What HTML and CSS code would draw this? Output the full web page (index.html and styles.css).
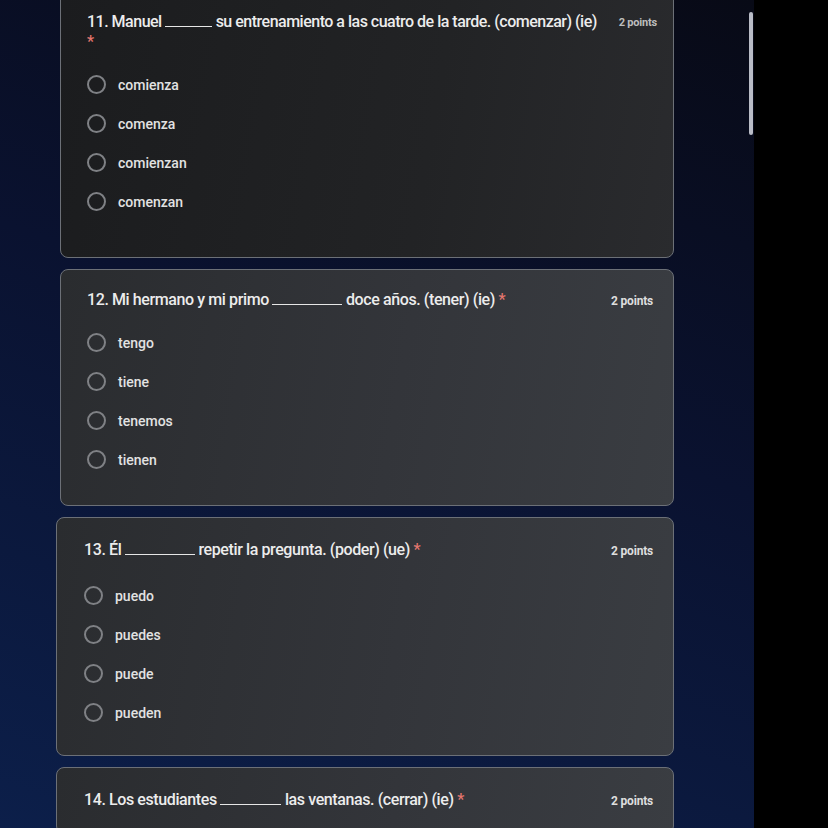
FILE: index.html
```html
<!DOCTYPE html>
<html lang="es">
<head>
    <meta charset="UTF-8">
    <title>Formulario</title>
    <link rel="stylesheet" href="styles.css">
</head>
<body>
<div class="screen">
    <div class="page">
        <div class="form">
            <div class="card card-first">
                <div class="head">
                    <div class="title">11. Manuel <span class="blank blank-s"></span> su entrenamiento a las cuatro de la tarde. (comenzar) (ie)<br><span class="req">*</span></div>
                    <div class="points points-small">2 points</div>
                </div>
                <ul class="options">
                    <li><span class="radio"></span>comienza</li>
                    <li><span class="radio"></span>comenza</li>
                    <li><span class="radio"></span>comienzan</li>
                    <li><span class="radio"></span>comenzan</li>
                </ul>
            </div>
            <div class="card">
                <div class="head">
                    <div class="title">12. Mi hermano y mi primo <span class="blank blank-m"></span> doce años. (tener) (ie) <span class="req">*</span></div>
                    <div class="points">2 points</div>
                </div>
                <ul class="options">
                    <li><span class="radio"></span>tengo</li>
                    <li><span class="radio"></span>tiene</li>
                    <li><span class="radio"></span>tenemos</li>
                    <li><span class="radio"></span>tienen</li>
                </ul>
            </div>
            <div class="card card-shift">
                <div class="head">
                    <div class="title">13. Él <span class="blank blank-m"></span> repetir la pregunta. (poder) (ue) <span class="req">*</span></div>
                    <div class="points">2 points</div>
                </div>
                <ul class="options">
                    <li><span class="radio"></span>puedo</li>
                    <li><span class="radio"></span>puedes</li>
                    <li><span class="radio"></span>puede</li>
                    <li><span class="radio"></span>pueden</li>
                </ul>
            </div>
            <div class="card card-shift">
                <div class="head">
                    <div class="title">14. Los estudiantes <span class="blank blank-n"></span> las ventanas. (cerrar) (ie) <span class="req">*</span></div>
                    <div class="points">2 points</div>
                </div>
            </div>
        </div>
        <div class="track"><div class="thumb"></div></div>
    </div>
    <div class="bezel"></div>
</div>
</body>
</html>
```

FILE: styles.css
```css
* {
    margin: 0;
    padding: 0;
    box-sizing: border-box;
}
html, body {
    height: 100%;
    overflow: hidden;
}
body {
    background: #000;
    font-family: Roboto, "Liberation Sans", sans-serif;
}
.screen {
    display: flex;
    height: 828px;
}
.page {
    flex: 0 0 754px;
    display: flex;
    background: linear-gradient(200deg, #080a16 0%, #0a1230 45%, #0c1f4a 100%);
}
.form {
    width: 614px;
    margin-left: 60px;
    margin-top: -9px;
    display: flex;
    flex-direction: column;
    gap: 11px;
}
.card {
    border: 1px solid #6c7077;
    border-radius: 8px;
    background: linear-gradient(100deg, #2a2c2f 0%, #33353a 55%, #3a3d42 100%);
    padding: 20px 20px 26px 26px;
}
.card-first {
    background: linear-gradient(100deg, #1b1c1e 0%, #222325 60%, #2a2b2e 100%);
    padding-right: 16px;
    padding-bottom: 36px;
}
.card-first .title {
    letter-spacing: -0.5px;
}
.card-shift {
    margin-left: -4px;
    padding-left: 27px;
    padding-top: 22px;
    padding-bottom: 23px;
}
.card-shift .options {
    margin-top: 16px;
}
.head {
    display: flex;
    align-items: flex-start;
    gap: 6px;
}
.title {
    flex: 1;
    color: #ececec;
    font-size: 16px;
    font-weight: 500;
    line-height: 20px;
    letter-spacing: -0.4px;
}
.blank {
    display: inline-block;
    border-bottom: 1.5px solid #e6e6e6;
    height: 15px;
    vertical-align: baseline;
}
.blank-s {
    width: 47px;
}
.blank-m {
    width: 70px;
}
.blank-n {
    width: 61px;
}
.req {
    color: #e4766e;
}
.points {
    color: #dedede;
    font-size: 12px;
    font-weight: 700;
    line-height: 17px;
    margin-top: 3px;
    letter-spacing: -0.2px;
}
.points-small {
    font-size: 11px;
    margin-top: 2px;
    color: #bdbdbd;
}
.options {
    list-style: none;
    margin-top: 13px;
}
.options li {
    display: flex;
    align-items: center;
    gap: 12px;
    height: 39px;
    color: #e2e2e2;
    font-size: 14px;
    font-weight: 500;
}
.radio {
    width: 19px;
    height: 19px;
    border: 2px solid #7f8185;
    border-radius: 50%;
    flex: 0 0 19px;
}
.track {
    margin-left: auto;
    width: 4px;
    margin-right: 1px;
}
.thumb {
    margin-top: 12px;
    height: 123px;
    width: 4px;
    border-radius: 2px;
    background: #b9bcc6;
}
.bezel {
    flex: 1;
    background: #000;
}
```
